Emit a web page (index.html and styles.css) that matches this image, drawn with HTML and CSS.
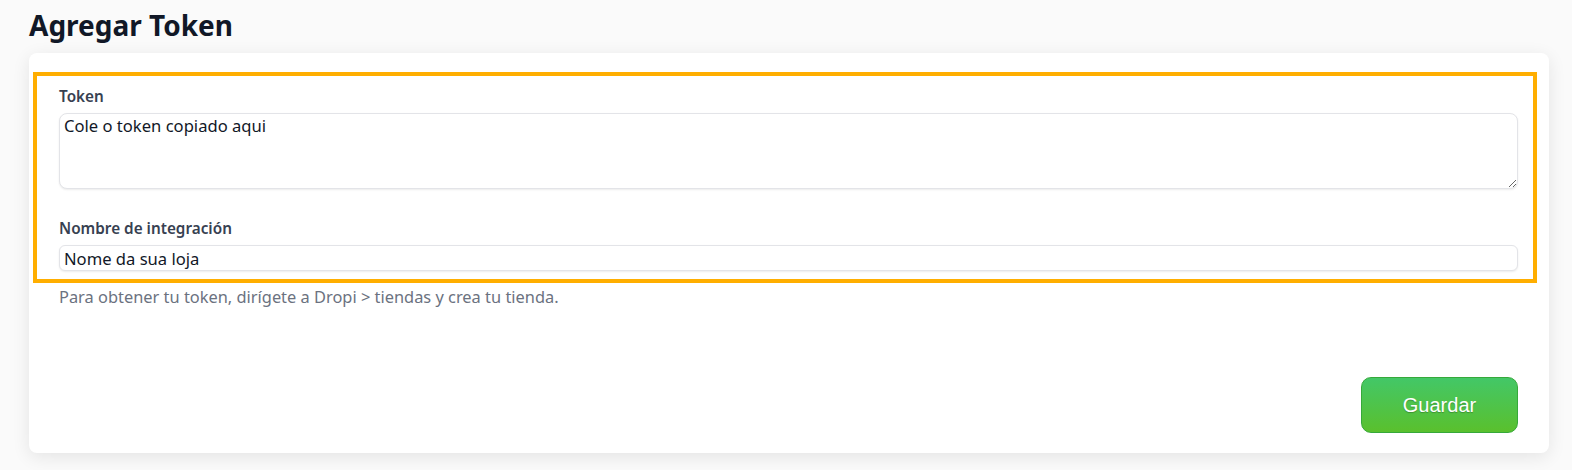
FILE: index.html
```html
<!DOCTYPE html>
<html lang="es">
<head>
<meta charset="utf-8">
<title>Agregar Token</title>
<link rel="stylesheet" href="styles.css">
</head>
<body>
<main class="page">
  <h1 class="page-title">Agregar Token</h1>
  <section class="card">
    <div class="highlight">
      <label class="field-label" for="token">Token</label>
      <textarea id="token" class="field-textarea">Cole o token copiado aqui</textarea>
      <label class="field-label second" for="name">Nombre de integración</label>
      <input id="name" class="field-input" type="text" value="Nome da sua loja">
    </div>
    <p class="help">Para obtener tu token, dirígete a Dropi &gt; tiendas y crea tu tienda.</p>
    <button class="btn-save" type="button">Guardar</button>
  </section>
</main>
</body>
</html>
```

FILE: styles.css
```css
html, body {
  margin: 0;
  padding: 0;
  background: #fafafa;
}

body {
  font-family: "Noto Sans", "Open Sans", sans-serif;
  color: #111827;
}

.page {
  padding: 8px 23px 17px 29px;
}

.page-title {
  margin: 0 0 10px;
  font-size: 28px;
  line-height: 35px;
  font-weight: 700;
  color: #111827;
}

.card {
  display: flex;
  flex-direction: column;
  background: #ffffff;
  border-radius: 8px;
  box-shadow: 0 4px 18px rgba(0, 0, 0, 0.09);
  padding: 19px 31px 20px 30px;
}

.highlight {
  display: flex;
  flex-direction: column;
  border: 4px solid #ffae00;
  margin: 0 -19px 0 -26px;
  padding: 10px 15px 8px 22px;
}

.field-label {
  display: block;
  font-size: 15.3px;
  line-height: 20px;
  font-weight: 600;
  color: #374151;
  margin-bottom: 7px;
}

.field-label.second {
  margin-top: 29px;
}

.field-textarea,
.field-input {
  box-sizing: border-box;
  width: 100%;
  font-family: inherit;
  font-size: 16.6px;
  color: #111827;
  background: #ffffff;
  border: 1px solid #e3e4e8;
  box-shadow: 0 1px 2px rgba(0, 0, 0, 0.08);
  margin: 0;
  outline: none;
}

.field-textarea {
  height: 76px;
  border-radius: 8px;
  padding: 1px 4px;
  line-height: 22px;
  resize: vertical;
}

.field-input {
  height: 26px;
  border-radius: 6px;
  padding: 0 4px;
  line-height: 24px;
}

.help {
  margin: 4px 0 0;
  font-size: 16.4px;
  line-height: 20px;
  color: #6b7280;
}

.btn-save {
  align-self: flex-end;
  margin-top: 70px;
  width: 157px;
  height: 56px;
  border: 1px solid #36a93a;
  border-radius: 10px;
  background: linear-gradient(180deg, #43c767 0%, #5ac02d 100%);
  color: #ffffff;
  font-family: "Liberation Sans", Arial, sans-serif;
  font-size: 20px;
  text-shadow: 0 1px 1px rgba(0, 0, 0, 0.25);
  cursor: pointer;
}
```
